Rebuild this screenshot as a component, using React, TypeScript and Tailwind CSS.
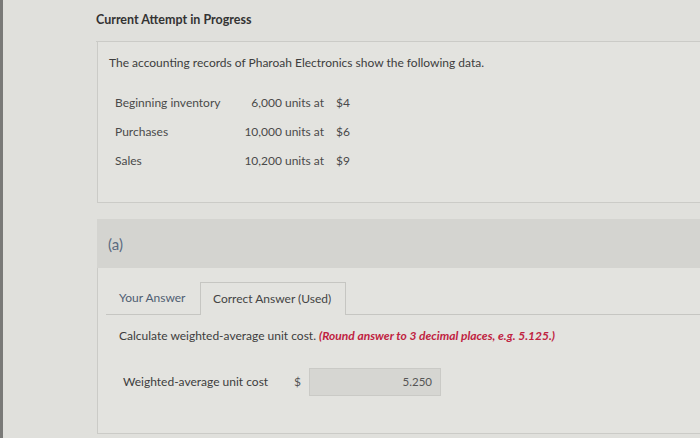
const rows = [
    { label: 'Beginning inventory', qty: '6,000 units at', price: '$4' },
    { label: 'Purchases', qty: '10,000 units at', price: '$6' },
    { label: 'Sales', qty: '10,200 units at', price: '$9' },
]

const App = () => {
    return (
        <div className="w-[700px] h-[438px] overflow-hidden bg-[#e0e0dc] border-l-[3px] border-[#7a7a78] font-['Lato','Liberation_Sans',sans-serif] text-[12px] leading-[16px] text-[#3d3d3d]">
            <div className="pl-[93px]">
                {/* heading */}
                <div className="h-[42px] pt-[12px] border-b border-[#cbcbc7] font-bold text-[12.5px] text-[#333]">Current Attempt in Progress</div>

                {/* question data */}
                <div className="h-[161px] ml-px border-l border-b border-[#cbcbc7] bg-[#e3e3df] pl-[11px] pt-[13px]">
                    <div>The accounting records of Pharoah Electronics show the following data.</div>
                    <div className="ml-[6px] mt-[24px] flex flex-col gap-[13px] text-[#4a4a4a]">
                        {rows.map((r) => (
                            <div key={r.label} className="flex">
                                <div className="w-[116px]">{r.label}</div>
                                <div className="w-[93px] text-right">{r.qty}</div>
                                <div className="ml-[12px]">{r.price}</div>
                            </div>
                        ))}
                    </div>
                </div>

                {/* part (a) band */}
                <div className="mt-[16px] ml-px h-[49px] bg-[#d4d4d0] flex items-center pl-[11px] text-[15px] text-[#5b6b80]">(a)</div>

                {/* answer area */}
                <div className="ml-px h-[166px] border-l border-b border-[#cbcbc7] bg-[#e3e3df] pt-[14px]">
                    <div className="ml-[8px] flex h-[33px] border-b border-[#c6c6c2]">
                        <div className="w-[94px] pl-[13px] flex items-center text-[#4f5e72]">Your Answer</div>
                        <div className="w-[146px] pl-[12px] flex items-center border-t border-l border-r border-[#c6c6c2] bg-[#e3e3df] -mb-px text-[#444]">Correct Answer (Used)</div>
                    </div>
                    <div className="mt-[13px] pl-[21px]">
                        Calculate weighted-average unit cost.{' '}
                        <span className="font-bold italic text-[#c0223f]">(Round answer to 3 decimal places, e.g. 5.125.)</span>
                    </div>
                    <div className="mt-[24px] pl-[25px] flex items-center">
                        <div className="w-[171px]">Weighted-average unit cost</div>
                        <div className="w-[15px] text-[#555]">$</div>
                        <div className="w-[132px] h-[28px] bg-[#d6d6d2] border border-[#cacac6] flex items-center justify-end pr-[8px] text-[11.5px] text-[#555]">5.250</div>
                    </div>
                </div>
            </div>
        </div>
    )
}
export default App
